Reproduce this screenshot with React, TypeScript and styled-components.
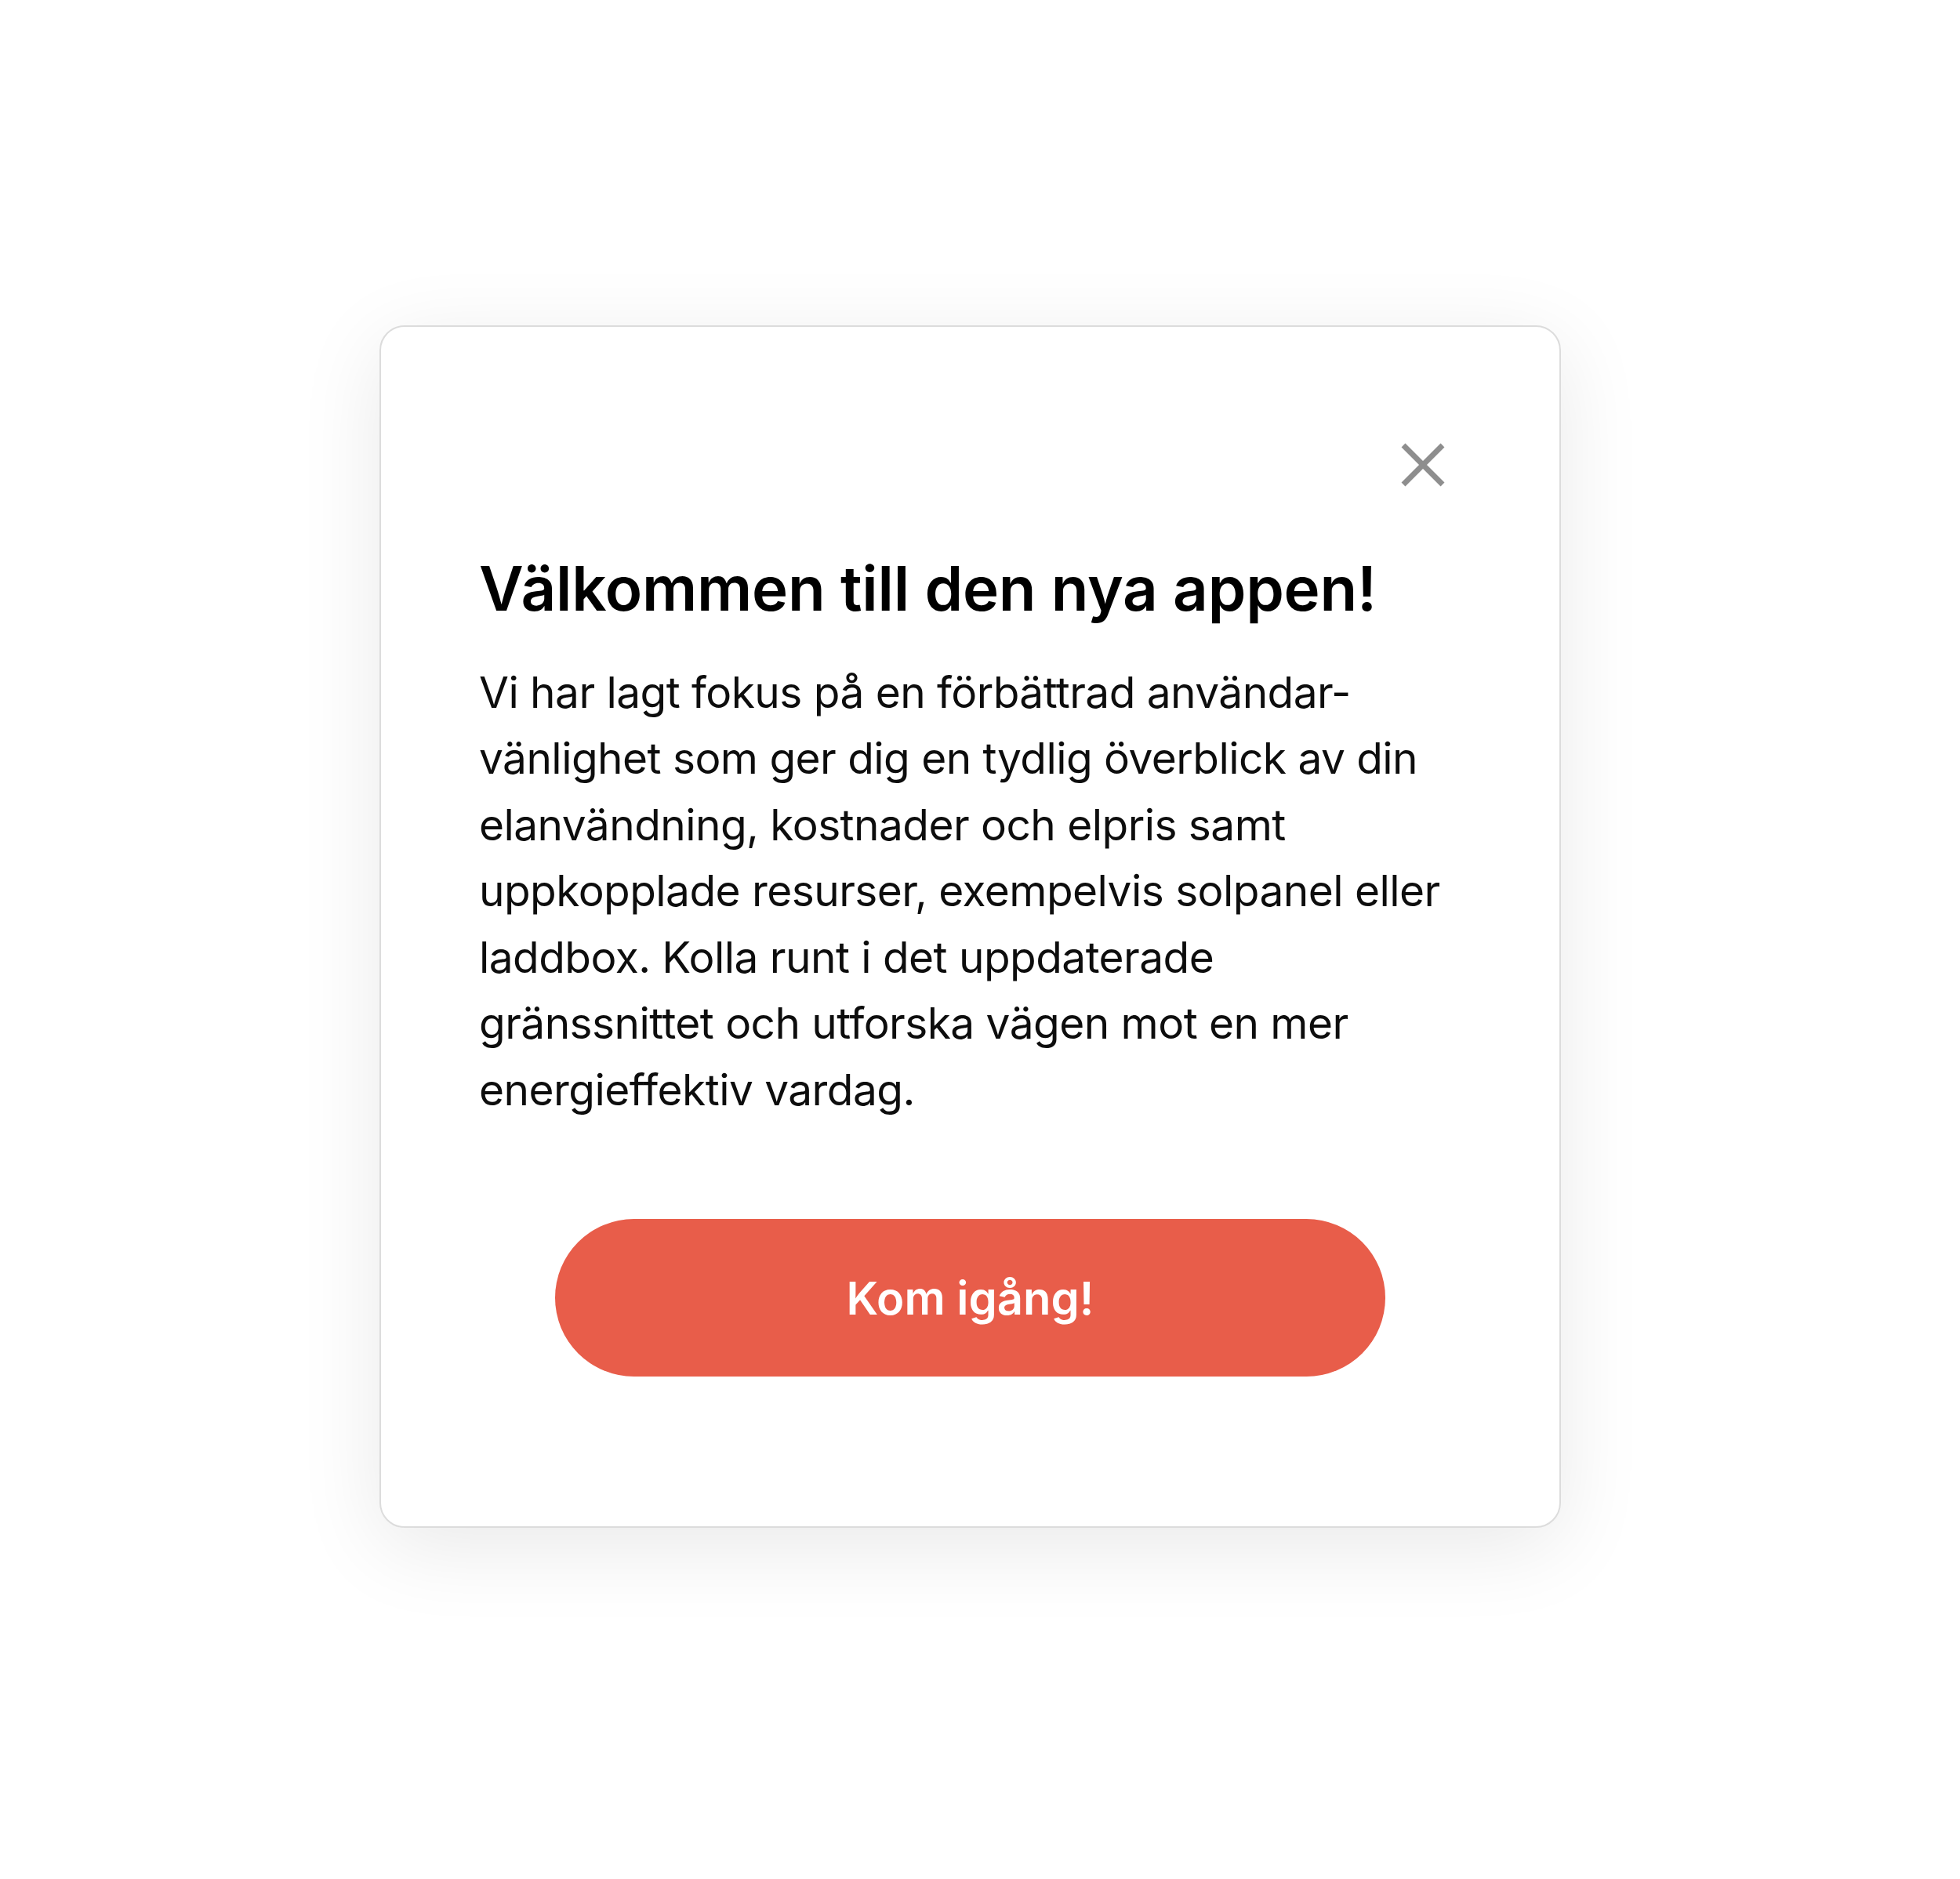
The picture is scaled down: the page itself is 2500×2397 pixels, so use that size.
import React from 'react';
import styled, { createGlobalStyle } from 'styled-components';

const GlobalStyle = createGlobalStyle`
  html, body {
    margin: 0;
    padding: 0;
    background: #ffffff;
  }
  body {
    font-family: Inter, "Noto Sans", "Liberation Sans", sans-serif;
    color: #0a0a0a;
    -webkit-font-smoothing: antialiased;
  }
`;

const Page = styled.div`
  min-height: 2397px;
  padding: 415px 0 0 484px;
  box-sizing: border-box;
`;

const Card = styled.div`
  width: 1507px;
  height: 1534px;
  box-sizing: border-box;
  background: #ffffff;
  border: 2px solid #dcdcdc;
  border-radius: 32px;
  box-shadow: 0 24px 110px rgba(0, 0, 0, 0.09);
  padding: 148px 119px 191px 125px;
  display: flex;
  flex-direction: column;
`;

const CloseRow = styled.div`
  display: flex;
  justify-content: flex-end;
  padding-right: 27px;
`;

const CloseButton = styled.button`
  width: 56px;
  height: 56px;
  padding: 0;
  border: none;
  background: transparent;
  cursor: pointer;
  display: flex;
  align-items: center;
  justify-content: center;
`;

const Title = styled.h1`
  margin: 83px 0 0;
  font-size: 78px;
  line-height: 1.2;
  font-weight: 600;
  letter-spacing: -0.2px;
  color: #000000;
`;

const Body = styled.p`
  margin: 43px 0 0;
  font-size: 55px;
  line-height: 84.5px;
  font-weight: 400;
  letter-spacing: -0.55px;
  color: #0d0d0d;
`;

const PrimaryButton = styled.button`
  align-self: center;
  margin: 123px 0 0 -6px;
  width: 1059px;
  height: 202px;
  border: none;
  border-radius: 101px;
  background: #e85d4a;
  color: #ffffff;
  font-family: Inter, "Noto Sans", "Liberation Sans", sans-serif;
  font-size: 58px;
  font-weight: 600;
  cursor: pointer;
`;

const CloseIcon = () => (
  <svg width="56" height="56" viewBox="0 0 56 56" fill="none">
    <path d="M3 3 L53 53 M53 3 L3 53" stroke="#8e8e8e" strokeWidth="7" />
  </svg>
);

const lines = [
  'Vi har lagt fokus på en förbättrad användar-',
  'vänlighet som ger dig en tydlig överblick av din',
  'elanvändning, kostnader och elpris samt',
  'uppkopplade resurser, exempelvis solpanel eller',
  'laddbox. Kolla runt i det uppdaterade',
  'gränssnittet och utforska vägen mot en mer',
  'energieffektiv vardag.',
];

const App: React.FC = () => {
  return (
    <>
      <GlobalStyle />
      <Page>
        <Card>
          <CloseRow>
            <CloseButton aria-label="Stäng">
              <CloseIcon />
            </CloseButton>
          </CloseRow>
          <Title>Välkommen till den nya appen!</Title>
          <Body>
            {lines.map((line, i) => (
              <React.Fragment key={i}>
                {line}
                {i < lines.length - 1 && <br />}
              </React.Fragment>
            ))}
          </Body>
          <PrimaryButton>Kom igång!</PrimaryButton>
        </Card>
      </Page>
    </>
  );
};

export default App;
